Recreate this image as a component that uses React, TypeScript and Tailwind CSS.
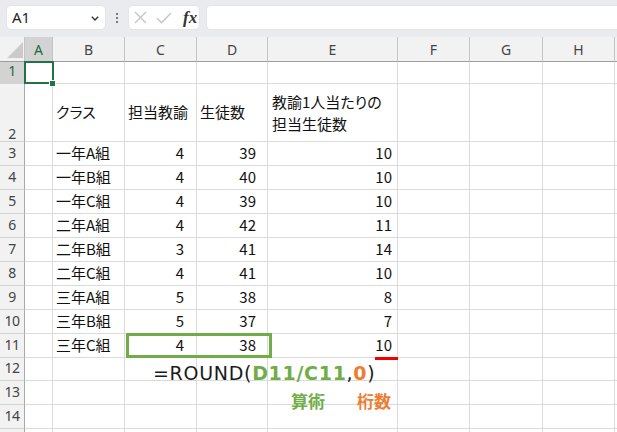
import React from "react";

const data: [string, string, string, string][] = [
  ["一年A組", "4", "39", "10"],
  ["一年B組", "4", "40", "10"],
  ["一年C組", "4", "39", "10"],
  ["二年A組", "4", "42", "11"],
  ["二年B組", "3", "41", "14"],
  ["二年C組", "4", "41", "10"],
  ["三年A組", "5", "38", "8"],
  ["三年B組", "5", "37", "7"],
  ["三年C組", "4", "38", "10"],
];

const COLS = ["A", "B", "C", "D", "E", "F", "G", "H"];

function Toolbar() {
  return (
    <div className="h-[37px] shrink-0 bg-[#e9ebee] flex items-start pt-[5px] pl-[6px]">
      <div className="w-[100px] h-[25px] bg-white rounded-[5px] border border-[#e2e4e7] flex items-center justify-between pl-[5px] pr-[6px]">
        <span className="text-[15px] text-[#1f1f1f] font-['Noto_Sans',sans-serif] leading-none">A1</span>
        <svg width="8" height="5" viewBox="0 0 8 5" className="mt-[1px]">
          <path d="M0.8 0.8 L4 4 L7.2 0.8" fill="none" stroke="#333" strokeWidth="1.4" />
        </svg>
      </div>
      <div className="w-[22px] h-[25px] flex flex-col items-center justify-center gap-[2px]">
        <div className="w-[2px] h-[2px] rounded-full bg-[#555]" />
        <div className="w-[2px] h-[2px] rounded-full bg-[#555]" />
        <div className="w-[2px] h-[2px] rounded-full bg-[#555]" />
      </div>
      <div className="w-[72px] h-[25px] bg-white rounded-[5px] border border-[#e2e4e7] flex items-center pl-[5px]">
        <svg width="13" height="13" viewBox="0 0 13 13">
          <path d="M1 1 L12 12 M12 1 L1 12" fill="none" stroke="#c4c4c4" strokeWidth="1.3" />
        </svg>
        <svg width="16" height="12" viewBox="0 0 16 12" className="ml-[9px]">
          <path d="M1 6 L5.5 10.8 L15 1" fill="none" stroke="#c4c4c4" strokeWidth="1.3" />
        </svg>
        <span className="ml-[11px] font-['Liberation_Serif',serif] italic font-bold text-[17px] text-[#333] leading-none">fx</span>
      </div>
      <div className="ml-[6px] flex-1 h-[25px] bg-white rounded-l-[5px] border border-r-0 border-[#e2e4e7]" />
    </div>
  );
}

function cellContent(r: number, c: number) {
  if (r === 2) {
    if (c === 1) return { cls: "pl-[3px]", node: "クラス" };
    if (c === 2) return { cls: "pl-[3px]", node: "担当教諭" };
    if (c === 3) return { cls: "pl-[3px]", node: "生徒数" };
    if (c === 4)
      return {
        cls: "pl-[4px]",
        node: (
          <div className="flex flex-col leading-[21.5px]">
            <span>教諭1人当たりの</span>
            <span>担当生徒数</span>
          </div>
        ),
      };
  }
  if (r >= 3 && r <= 11) {
    const d = data[r - 3];
    if (c === 1) return { cls: "pl-[3px]", node: d[0] };
    if (c === 2) return { cls: "justify-end pr-[12px]", node: d[1] };
    if (c === 3) return { cls: "justify-end pr-[11px]", node: d[2] };
    if (c === 4) return { cls: "justify-end pr-[5px]", node: d[3] };
  }
  return { cls: "", node: null };
}

function Sheet() {
  const rowNums = Array.from({ length: 15 }, (_, i) => i + 1);
  return (
    <div className="relative flex-1 grid grid-cols-[25px_28px_72px_72px_71px_130px_72px_73px_72px_1fr] grid-rows-[25px_22px_58px_repeat(9,24px)_23px_24px_24px_1fr] overflow-hidden">
      {/* header row */}
      <div className="bg-[#f2f2f2] border-r border-b border-r-[#c4c4c4] border-b-[#9e9e9e] relative">
        <svg width="25" height="25" viewBox="0 0 25 25" className="absolute left-0 top-0">
          <path d="M7 21 L23 21 L23 5 Z" fill="#cbcbcb" />
        </svg>
      </div>
      {COLS.map((l) => (
        <div
          key={l}
          className={
            l === "A"
              ? "bg-[#d3d3d3] text-[#1d6b40] border-r border-b border-r-[#c4c4c4] border-b-[#9e9e9e] flex items-center justify-center text-[14px] font-['Noto_Sans',sans-serif]"
              : "bg-[#f2f2f2] text-[#444] border-r border-b border-r-[#c4c4c4] border-b-[#9e9e9e] flex items-center justify-center text-[14px] font-['Noto_Sans',sans-serif]"
          }
        >
          {l}
        </div>
      ))}
      <div className="bg-[#f2f2f2] border-b border-b-[#9e9e9e]" />

      {rowNums.map((r) => (
        <React.Fragment key={r}>
          <div
            className={
              (r === 1 ? "bg-[#d3d3d3] text-[#1d6b40] " : "bg-[#f2f2f2] text-[#444] ") +
              (r === 15 ? "" : "border-b border-b-[#d2d2d2] ") +
              (r === 2 ? "leading-[14px] " : "leading-[20px] pb-[2px] ") +
              "border-r border-r-[#a8a8a8] flex justify-center items-end text-[14px] tracking-[-0.5px] font-['Noto_Sans',sans-serif]"
            }
          >
            {r === 15 ? null : r}
          </div>
          {Array.from({ length: 9 }, (_, c) => {
            const { cls, node } = cellContent(r, c + 0);
            return (
              <div
                key={c}
                className={
                  (r === 15 ? "" : "border-b ") +
                  (c === 8 ? "" : "border-r ") +
                  "border-[#dadada] flex items-center whitespace-nowrap overflow-hidden text-[15px] text-[#111] [font-feature-settings:'palt'] " +
                  cls
                }
              >
                {node}
              </div>
            );
          })}
        </React.Fragment>
      ))}

      {/* selection A1 */}
      <div className="absolute left-[24px] top-[24px] w-[30px] h-[23px] border-2 border-[#217346]" />
      <div className="absolute left-[49px] top-[43px] w-[7px] h-[7px] bg-[#217346] border border-white" />

      {/* annotations */}
      <div className="absolute left-[126px] top-[296px] w-[146px] h-[25px] border-[3px] border-[#70ad47]" />
      <div className="absolute left-[375px] top-[320px] w-[23px] h-[3px] bg-[#f00000]" />
      <div className="absolute left-[153px] top-[327px] whitespace-nowrap leading-none text-[19px] tracking-[0.7px] font-['DejaVu_Sans',sans-serif] text-[#1a1a1a]">
        <span>=ROUND(</span>
        <span className="font-bold text-[#70ad47]">D11/C11</span>
        <span>,</span>
        <span className="font-bold text-[#ed7d31]">0</span>
        <span>)</span>
      </div>
      <div className="absolute left-[291px] top-[355px] leading-none text-[17px] font-bold text-[#70ad47]">算術</div>
      <div className="absolute left-[357px] top-[355px] leading-none text-[17px] font-bold text-[#ed7d31]">桁数</div>
    </div>
  );
}

export default function App() {
  return (
    <div className="w-[617px] h-[432px] overflow-hidden bg-white flex flex-col font-['Noto_Sans_CJK_JP',sans-serif]">
      <Toolbar />
      <Sheet />
    </div>
  );
}
